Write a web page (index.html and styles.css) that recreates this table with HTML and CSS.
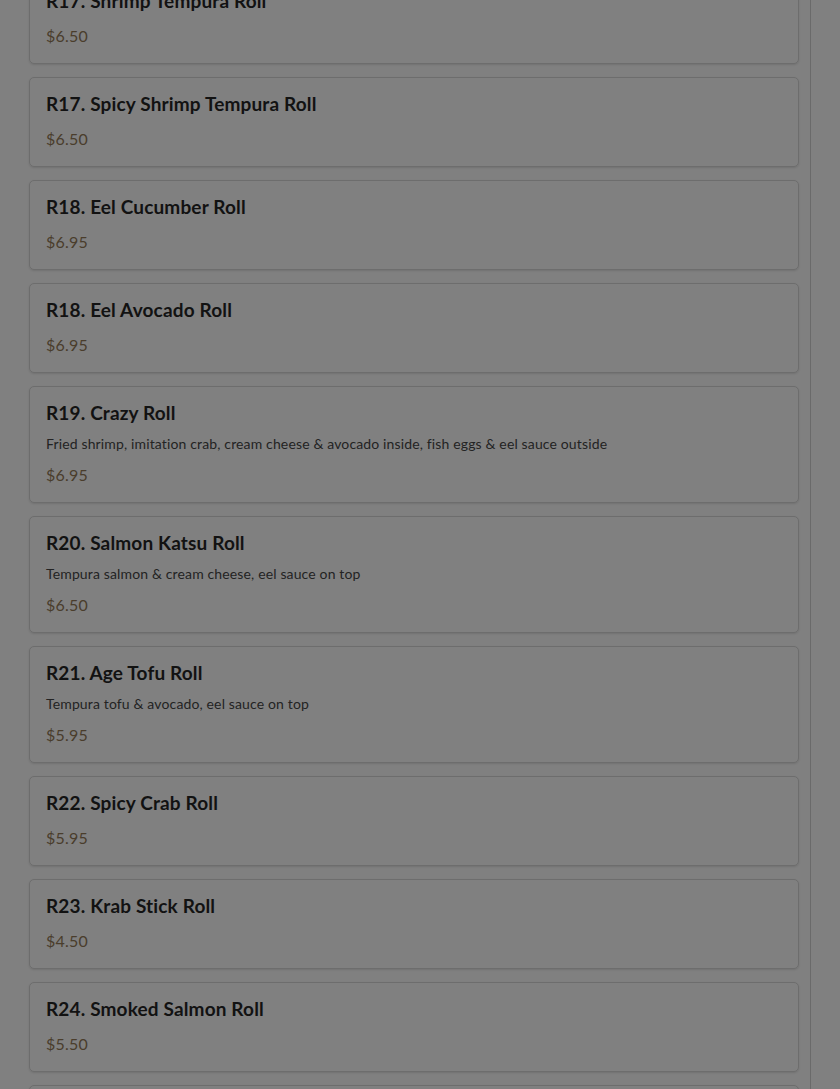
FILE: index.html
```html
<!DOCTYPE html>
<html lang="en">
<head>
<meta charset="utf-8">
<title>Menu</title>
<link rel="stylesheet" href="styles.css">
</head>
<body>
<div class="page">
  <main class="menu-col">
    <div class="menu-list">
      <div class="item"><div class="item-title">R17. Shrimp Tempura Roll</div><div class="item-price">$6.50</div></div>
      <div class="item"><div class="item-title">R17. Spicy Shrimp Tempura Roll</div><div class="item-price">$6.50</div></div>
      <div class="item"><div class="item-title">R18. Eel Cucumber Roll</div><div class="item-price">$6.95</div></div>
      <div class="item"><div class="item-title">R18. Eel Avocado Roll</div><div class="item-price">$6.95</div></div>
      <div class="item"><div class="item-title">R19. Crazy Roll</div><div class="item-desc">Fried shrimp, imitation crab, cream cheese &amp; avocado inside, fish eggs &amp; eel sauce outside</div><div class="item-price">$6.95</div></div>
      <div class="item"><div class="item-title">R20. Salmon Katsu Roll</div><div class="item-desc">Tempura salmon &amp; cream cheese, eel sauce on top</div><div class="item-price">$6.50</div></div>
      <div class="item"><div class="item-title">R21. Age Tofu Roll</div><div class="item-desc">Tempura tofu &amp; avocado, eel sauce on top</div><div class="item-price">$5.95</div></div>
      <div class="item"><div class="item-title">R22. Spicy Crab Roll</div><div class="item-price">$5.95</div></div>
      <div class="item"><div class="item-title">R23. Krab Stick Roll</div><div class="item-price">$4.50</div></div>
      <div class="item"><div class="item-title">R24. Smoked Salmon Roll</div><div class="item-price">$5.50</div></div>
      <div class="item"><div class="item-title">R25. Spicy Salmon Roll</div><div class="item-price">$5.95</div></div>
    </div>
  </main>
  <aside class="side"></aside>
</div>
</body>
</html>
```
FILE: styles.css
```css
html, body {
  margin: 0;
  padding: 0;
  background: #808080;
  height: 100%;
  overflow: hidden;
}
body {
  font-family: "Lato", "Noto Sans", sans-serif;
}
.page {
  display: flex;
  height: 1089px;
  overflow: hidden;
}
.menu-col {
  width: 811px;
  border-right: 1px solid #6a6a6a;
  box-sizing: border-box;
  flex-shrink: 0;
}
.menu-list {
  display: flex;
  flex-direction: column;
  gap: 13px;
  margin-top: -26px;
  padding: 0 11px 0 29px;
}
.item {
  border: 1px solid #6d6d6d;
  border-radius: 5px;
  padding: 15px 16px 16px 16px;
  display: flex;
  flex-direction: column;
  box-shadow: 0 1px 2px rgba(0,0,0,0.12);
}
.item-title {
  font-size: 19px;
  font-weight: 700;
  letter-spacing: 0.15px;
  line-height: 22px;
  color: #121212;
  margin-bottom: 13px;
}
.item-desc {
  font-size: 14px;
  letter-spacing: 0.14px;
  line-height: 20px;
  color: #232323;
  margin: -3px 0 10px;
}
.item-price {
  font-size: 16px;
  letter-spacing: 0.2px;
  line-height: 22px;
  color: #4a3d2c;
}
.side {
  flex: 1;
}
```
